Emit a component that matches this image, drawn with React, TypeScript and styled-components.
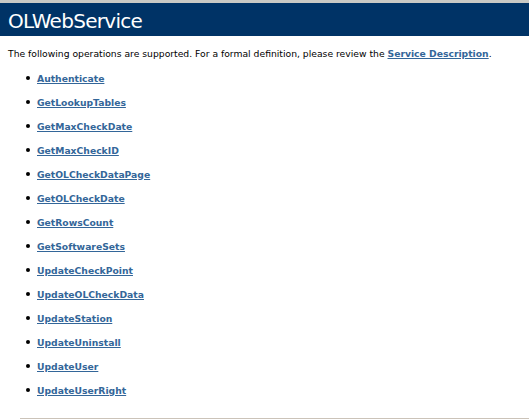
import React from "react";
import styled, { createGlobalStyle } from "styled-components";

const Global = createGlobalStyle`
  html, body { margin: 0; padding: 0; background: #ffffff; }
  body { font-family: "DejaVu Sans", Verdana, sans-serif; color: #000000; }
`;

const Page = styled.div`
  display: flex;
  flex-direction: column;
  border-top: 3px solid #c9c9c4;
`;

const Heading = styled.div`
  background: #003366;
  color: #ffffff;
  font-family: "DejaVu Sans", Tahoma, sans-serif;
  font-size: 20px;
  font-weight: normal;
  height: 33px;
  line-height: 36px;
  padding-left: 8px;
  letter-spacing: -0.7px;
`;

const Content = styled.div`
  font-size: 9.22px;
  padding-left: 8px;
`;

const Intro = styled.p`
  margin: 12px 0 0 0;
  line-height: 12px;
`;

const Link = styled.a`
  color: #336699;
  font-weight: bold;
  text-decoration: underline;
`;

const List = styled.ul`
  list-style: none;
  margin: 12px 0 0 0;
  padding: 0 0 0 18px;
  display: flex;
  flex-direction: column;
  gap: 12px;
`;

const Item = styled.li`
  display: flex;
  align-items: center;
  gap: 7px;
  height: 12px;
`;

const Bullet = styled.span`
  width: 4px;
  height: 4px;
  border-radius: 50%;
  background: #000000;
`;

const Rule = styled.hr`
  margin: 22px 0 0 20px;
  border: none;
  border-top: 2px solid #cbc3b9;
  height: 0;
`;

const ops = [
  "Authenticate",
  "GetLookupTables",
  "GetMaxCheckDate",
  "GetMaxCheckID",
  "GetOLCheckDataPage",
  "GetOLCheckDate",
  "GetRowsCount",
  "GetSoftwareSets",
  "UpdateCheckPoint",
  "UpdateOLCheckData",
  "UpdateStation",
  "UpdateUninstall",
  "UpdateUser",
  "UpdateUserRight",
];

export default function App() {
  return (
    <>
      <Global />
      <Page>
        <Heading>OLWebService</Heading>
        <Content>
          <Intro>
            The following operations are supported. For a formal definition, please review the{" "}
            <Link href="#">Service Description</Link>.
          </Intro>
          <List>
            {ops.map((o) => (
              <Item key={o}>
                <Bullet />
                <Link href="#">{o}</Link>
              </Item>
            ))}
          </List>
        </Content>
        <Rule />
      </Page>
    </>
  );
}
